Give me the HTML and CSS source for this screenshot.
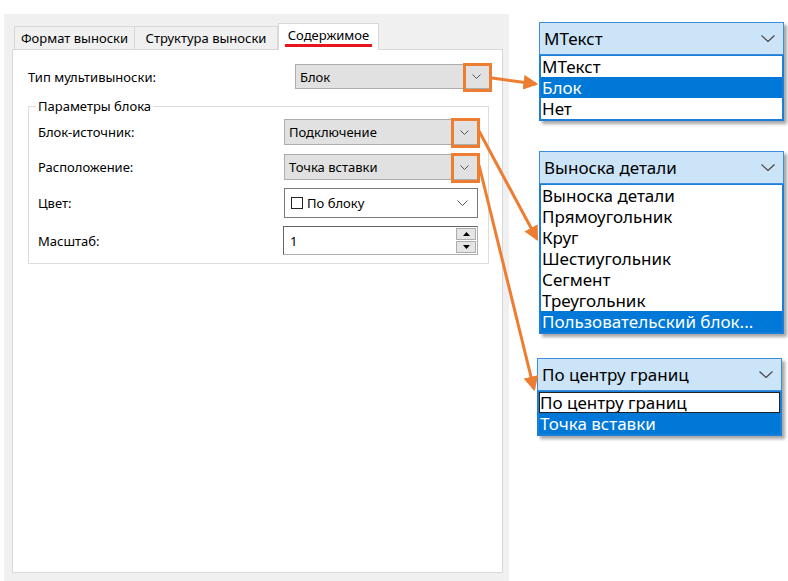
FILE: index.html
```html
<!DOCTYPE html>
<html lang="ru">
<head>
<meta charset="utf-8">
<title>Содержимое</title>
<link rel="stylesheet" href="styles.css">
</head>
<body>
<div class="stage">
  <div class="dialog">
    <div class="tabs">
      <div class="tab t1">Формат выноски</div>
      <div class="tab t2">Структура выноски</div>
      <div class="tab t3 active"><span class="underline">Содержимое</span></div>
    </div>
    <div class="page">
      <div class="row top-row">
        <span class="label">Тип мультивыноски:</span>
        <div class="combo combo-wide">
          <span class="val">Блок</span>
          <span class="arrow"><svg width="9" height="5" viewBox="0 0 9 5"><path d="M0.5 0.5 L4.5 4.5 L8.5 0.5" fill="none" stroke="#555" stroke-width="1"/></svg></span>
          <span class="hl"></span>
        </div>
      </div>
      <fieldset class="group">
        <legend>Параметры блока</legend>
        <div class="rows">
          <div class="row">
            <span class="label">Блок-источник:</span>
            <div class="combo">
              <span class="val">Подключение</span>
              <span class="arrow"><svg width="9" height="5" viewBox="0 0 9 5"><path d="M0.5 0.5 L4.5 4.5 L8.5 0.5" fill="none" stroke="#555" stroke-width="1"/></svg></span>
              <span class="hl"></span>
            </div>
          </div>
          <div class="row">
            <span class="label">Расположение:</span>
            <div class="combo">
              <span class="val">Точка вставки</span>
              <span class="arrow"><svg width="9" height="5" viewBox="0 0 9 5"><path d="M0.5 0.5 L4.5 4.5 L8.5 0.5" fill="none" stroke="#555" stroke-width="1"/></svg></span>
              <span class="hl"></span>
            </div>
          </div>
          <div class="row">
            <span class="label">Цвет:</span>
            <div class="combo combo-white">
              <span class="swatch"></span>
              <span class="val">По блоку</span>
              <span class="arrow"><svg width="11" height="6" viewBox="0 0 11 6"><path d="M0.5 0.5 L5.5 5.5 L10.5 0.5" fill="none" stroke="#555" stroke-width="1"/></svg></span>
            </div>
          </div>
          <div class="row">
            <span class="label">Масштаб:</span>
            <div class="spin">
              <span class="val">1</span>
              <span class="spin-btns">
                <span class="sb"><svg width="7" height="4" viewBox="0 0 7 4"><path d="M3.5 0 L7 4 L0 4 Z" fill="#000"/></svg></span>
                <span class="sb"><svg width="7" height="4" viewBox="0 0 7 4"><path d="M0 0 L7 0 L3.5 4 Z" fill="#000"/></svg></span>
              </span>
            </div>
          </div>
        </div>
      </fieldset>
    </div>
  </div>

  <div class="callouts">
    <div class="dd dd1">
      <div class="dd-head"><span>МТекст</span><svg width="14" height="7" viewBox="0 0 14 7"><path d="M0.5 0.5 L7 6.5 L13.5 0.5" fill="none" stroke="#444" stroke-width="1.2"/></svg></div>
      <ul class="dd-list">
        <li>МТекст</li>
        <li class="sel">Блок</li>
        <li>Нет</li>
      </ul>
    </div>
    <div class="dd dd2">
      <div class="dd-head"><span>Выноска детали</span><svg width="14" height="7" viewBox="0 0 14 7"><path d="M0.5 0.5 L7 6.5 L13.5 0.5" fill="none" stroke="#444" stroke-width="1.2"/></svg></div>
      <ul class="dd-list">
        <li>Выноска детали</li>
        <li>Прямоугольник</li>
        <li>Круг</li>
        <li>Шестиугольник</li>
        <li>Сегмент</li>
        <li>Треугольник</li>
        <li class="sel">Пользовательский блок...</li>
      </ul>
    </div>
    <div class="dd dd3">
      <div class="dd-head"><span>По центру границ</span><svg width="14" height="7" viewBox="0 0 14 7"><path d="M0.5 0.5 L7 6.5 L13.5 0.5" fill="none" stroke="#444" stroke-width="1.2"/></svg></div>
      <ul class="dd-list">
        <li class="focus">По центру границ</li>
        <li class="sel">Точка вставки</li>
      </ul>
    </div>
  </div>

  <svg class="arrows" width="788" height="581" viewBox="0 0 788 581">
    <defs>
      <marker id="ah" markerWidth="5" markerHeight="5" refX="4.2" refY="2.5" orient="auto" markerUnits="strokeWidth">
        <path d="M0 0 L5 2.5 L0 5 Z" fill="#ed7d31"/>
      </marker>
    </defs>
    <g fill="none" stroke="#ed7d31" stroke-width="3">
      <path d="M492 78 L536 84" marker-end="url(#ah)"/>
      <path d="M479 131 L537 239" marker-end="url(#ah)"/>
      <path d="M479 165 L534 389" marker-end="url(#ah)"/>
    </g>
  </svg>
</div>
</body>
</html>
```
FILE: styles.css
```css
* { box-sizing: border-box; }

body {
  margin: 0;
  background: #fff;
  font-family: "Noto Sans", "Liberation Sans", sans-serif;
  color: #000;
}

.stage {
  position: relative;
  width: 788px;
  height: 581px;
  display: flex;
  align-items: flex-start;
  overflow: hidden;
}

/* ---------- dialog ---------- */
.dialog {
  margin: 14px 0 0 4px;
  width: 505px;
  height: 567px;
  background: #f0f0f0;
  display: flex;
  flex-direction: column;
  padding: 9px 6px 8px 8px;
  font-size: 13px;
}

.tabs {
  display: flex;
  align-items: flex-end;
  padding-left: 2px;
  position: relative;
  z-index: 1;
}

.tab {
  height: 23px;
  border: 1px solid #d9d9d9;
  border-bottom: none;
  background: #f0f0f0;
  display: flex;
  align-items: center;
  justify-content: center;
  white-space: nowrap;
}

.t1 { width: 121px; }
.t2 { width: 143px; border-left: none; }
.t3 { width: 101px; }

.tab.active {
  height: 27px;
  background: #fff;
  margin-bottom: -1px;
  align-items: flex-start;
  padding-top: 3px;
}

.underline {
  display: inline-block;
  padding: 0 3px 1px;
  border-bottom: 3px solid #e8141e;
  line-height: 16px;
}

.page {
  flex: 1;
  background: #fff;
  border: 1px solid #d9d9d9;
  padding: 14px 13px 0 15px;
}

.row {
  display: flex;
  align-items: center;
  justify-content: space-between;
}

.label { white-space: nowrap; }

.combo {
  position: relative;
  width: 194px;
  height: 26px;
  display: flex;
  align-items: center;
  background: #e1e1e1;
  border: 1px solid #adadad;
  padding-left: 4px;
}

.combo-wide {
  width: 195px;
  height: 25px;
  margin-right: -1px;
}

.combo .arrow {
  margin-left: auto;
  width: 25px;
  height: 100%;
  display: flex;
  align-items: center;
  justify-content: center;
}

.combo .hl {
  position: absolute;
  right: -3px;
  top: -2px;
  width: 29px;
  height: 30px;
  border: 3px solid #ed7d31;
}

.combo-wide .hl { height: 29px; }

.combo-white {
  height: 30px;
  background: #fff;
  border-color: #7a7a7a;
  padding-left: 6px;
}

.combo-white .arrow { width: 30px; }

.swatch {
  width: 12px;
  height: 12px;
  border: 1px solid #222;
  background: #fff;
  margin-right: 4px;
}

.spin {
  width: 195px;
  height: 29px;
  display: flex;
  align-items: center;
  background: #fff;
  border: 1px solid #adadad;
  border-top-color: #646464;
  border-left-color: #646464;
  padding-left: 6px;
  margin-left: -1px;
}

.spin-btns {
  margin-left: auto;
  margin-right: 1px;
  display: flex;
  flex-direction: column;
  gap: 1px;
}

.sb {
  width: 20px;
  height: 12px;
  background: #e5e5e5;
  border: 1px solid #adadad;
  display: flex;
  align-items: center;
  justify-content: center;
}

.group {
  margin: 8px 0 0 0;
  border: 1px solid #dcdcdc;
  padding: 4px 10px 8px 9px;
  min-width: 0;
}

.group legend {
  padding: 0 2px;
  margin-left: -2px;
  line-height: 18px;
}

.rows {
  display: flex;
  flex-direction: column;
  gap: 8px;
}

.rows .row:nth-child(2) { margin-top: 1px; }

/* ---------- callouts ---------- */
.callouts {
  margin-left: 28px;
  display: flex;
  flex-direction: column;
  font-size: 17px;
}

.dd {
  width: 245px;
  box-shadow: 3px 3px 3px rgba(0, 0, 0, 0.35);
}

.dd1 { margin: 22px 0 0 2px; }
.dd2 { margin: 30px 0 0 2px; }
.dd3 { margin: 24px 0 0 0; }

.dd-head {
  height: 33px;
  background: #cce4f7;
  border: 1px solid #3c8ddb;
  display: flex;
  align-items: center;
  justify-content: space-between;
  padding: 0 8px 0 4px;
}

.dd-list {
  list-style: none;
  margin: 0;
  padding: 0;
  background: #fff;
  border: 2px solid #1a7fd8;
  border-top-width: 1px;
}

.dd-list li {
  height: 21px;
  line-height: 21px;
  padding-left: 1px;
  white-space: nowrap;
}

.dd-list li.sel {
  background: #0078d7;
  color: #fff;
}

.dd-list li.focus {
  outline: 1px solid #222;
  outline-offset: -1px;
}

.arrows {
  position: absolute;
  left: 0;
  top: 0;
  pointer-events: none;
}
```
